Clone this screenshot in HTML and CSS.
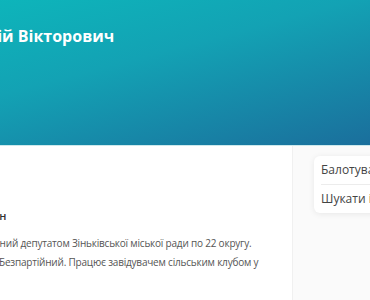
FILE: index.html
```html
<!DOCTYPE html>
<html lang="uk">
<head>
    <meta charset="UTF-8">
    <meta name="viewport" content="width=device-width, initial-scale=1.0">
    <title>Мельник Анатолій Вікторович</title>
    <link rel="stylesheet" href="styles.css">
</head>
<body>
<div class="page">
    <!-- Header -->
    <div class="hero">
        <h1 class="hero-title">Мельник Анатолій Вікторович</h1>
    </div>

    <div class="content">
        <!-- Main column -->
        <div class="main">
            <div class="bio-label">Громадянин</div>
            <p class="bio-text">Обраний депутатом Зіньківської міської ради по 22 округу. Безпартійний. Працює завідувачем сільським клубом у селі.</p>
        </div>

        <!-- Sidebar -->
        <div class="sidebar">
            <div class="side-card">
                <div class="side-item">Балотування в інших округах</div>
                <div class="side-item">Шукати інших кандидатів</div>
            </div>
        </div>
    </div>
</div>
</body>
</html>
```

FILE: styles.css
```css
body {
    margin: 0;
    overflow: hidden;
    font-family: "Open Sans", Arial, sans-serif;
    background: #fff;
}
.page {
    margin-left: -140px;
    width: 560px;
}
.hero {
    height: 146px;
    background: linear-gradient(165deg, #0bbcbd 0%, #13a2b4 45%, #1b6a9a 100%);
    border-bottom: 1px solid #cce9ec;
    box-sizing: border-box;
}
.hero-title {
    margin: 0;
    padding: 25px 0 0 0;
    font-size: 16px;
    font-weight: 700;
    line-height: 23px;
    color: #fff;
    text-indent: -4px;
}
.content {
    display: flex;
}
.main {
    flex: none;
    width: 432px;
    padding: 60px 30px 0 139px;
    box-sizing: border-box;
}
.bio-label {
    font-size: 11px;
    font-weight: 600;
    line-height: 19px;
    color: #333;
    text-indent: -62px;
}
.bio-text {
    margin: 9px 0 0;
    font-size: 10px;
    letter-spacing: -0.2px;
    line-height: 19px;
    color: #555;
    text-indent: -24px;
    max-height: 38px;
    overflow: hidden;
}
.sidebar {
    flex: 1;
    min-height: 160px;
    padding: 10px 0 0 21px;
    background: #fafafa;
    border-left: 1px solid #f0f0f0;
}
.side-card {
    width: 220px;
    padding: 0 7px;
    background: #fff;
    border-radius: 6px;
    box-shadow: 0 1px 6px rgba(0, 0, 0, 0.08);
}
.side-item {
    height: 28px;
    line-height: 28px;
    font-size: 12px;
    color: #444;
    white-space: nowrap;
}
.side-item + .side-item {
    border-top: 1px solid #ececec;
}
```
